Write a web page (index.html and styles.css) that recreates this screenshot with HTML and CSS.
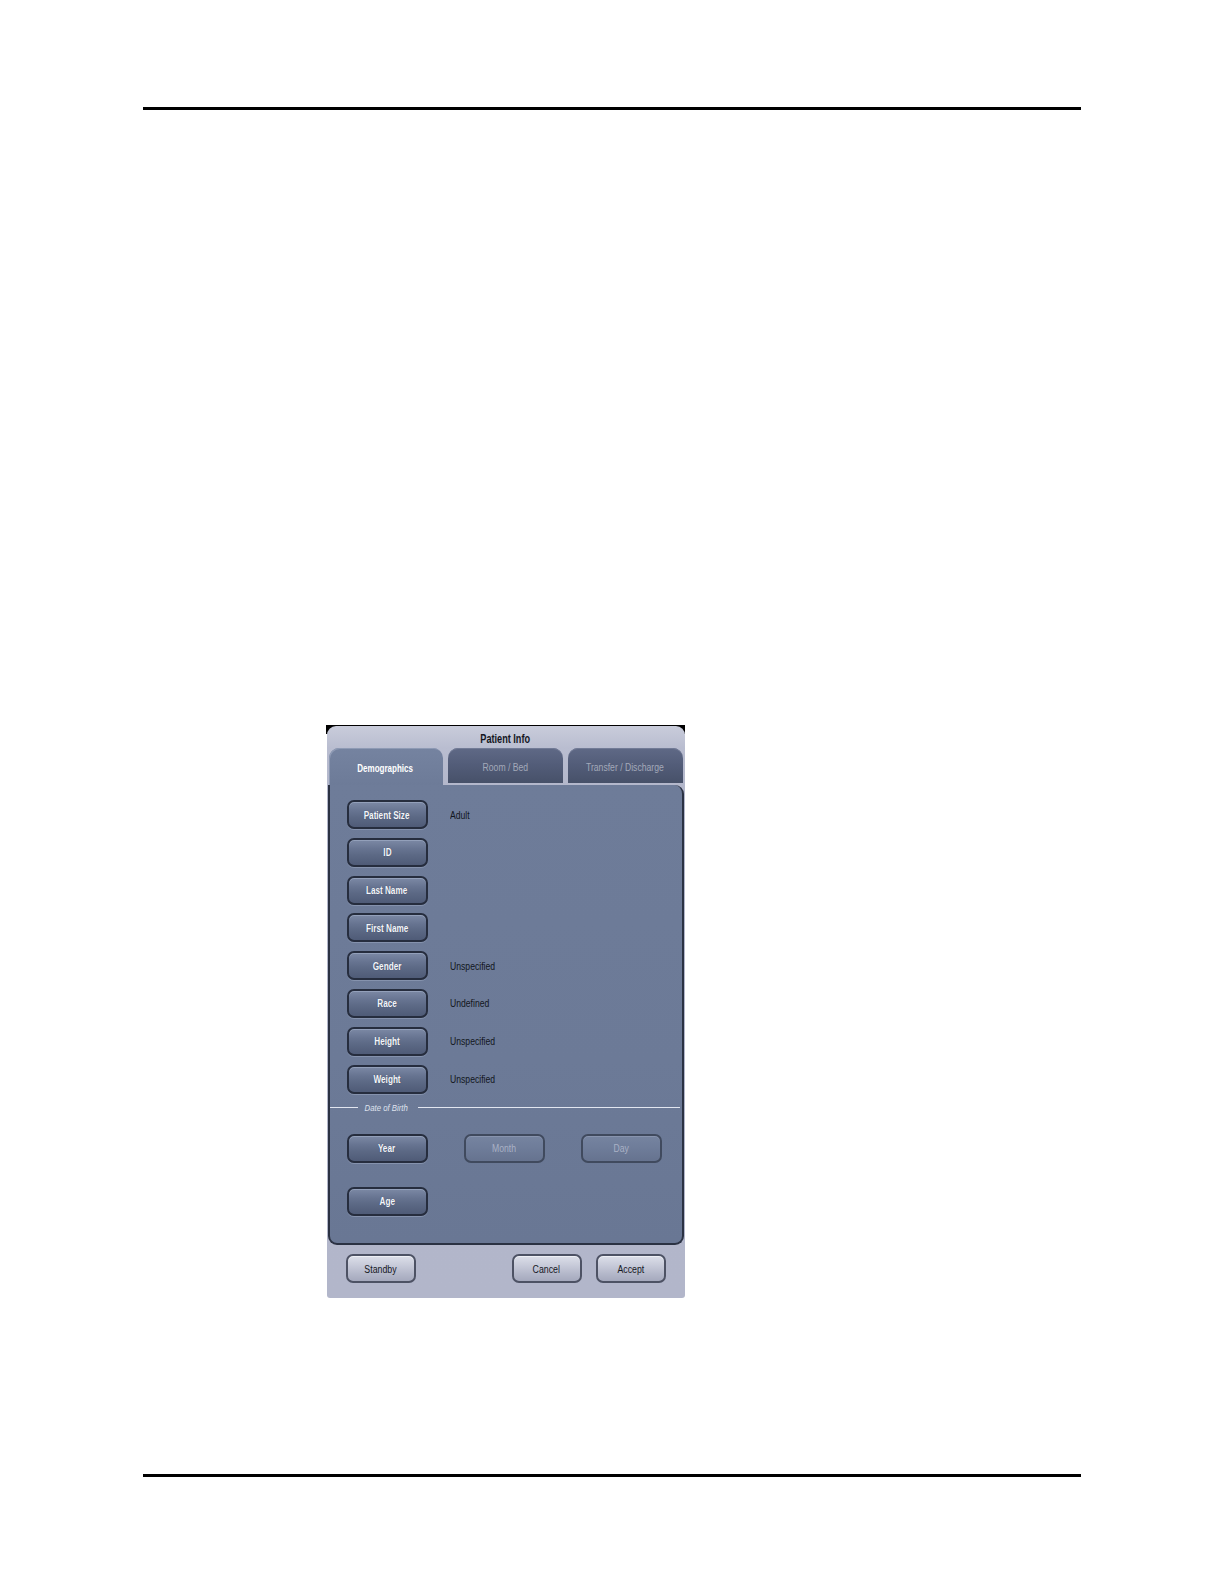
FILE: index.html
```html
<!DOCTYPE html>
<html lang="en">
<head>
<meta charset="utf-8">
<title>Patient Info</title>
<link rel="stylesheet" href="styles.css">
</head>
<body>
<div class="rule rule-top"></div>
<div class="shot">
  <div class="dialog">
    <div class="title"><span class="t">Patient Info</span></div>
    <div class="tabs">
      <div class="tab active"><span class="t">Demographics</span></div>
      <div class="tab"><span class="t">Room / Bed</span></div>
      <div class="tab"><span class="t">Transfer / Discharge</span></div>
    </div>
    <div class="panel">
      <div class="rows">
        <div class="row"><div class="btn"><span class="t">Patient Size</span></div><span class="val t">Adult</span></div>
        <div class="row"><div class="btn"><span class="t">ID</span></div><span class="val t"></span></div>
        <div class="row"><div class="btn"><span class="t">Last Name</span></div><span class="val t"></span></div>
        <div class="row"><div class="btn"><span class="t">First Name</span></div><span class="val t"></span></div>
        <div class="row"><div class="btn"><span class="t">Gender</span></div><span class="val t">Unspecified</span></div>
        <div class="row"><div class="btn"><span class="t">Race</span></div><span class="val t">Undefined</span></div>
        <div class="row"><div class="btn"><span class="t">Height</span></div><span class="val t">Unspecified</span></div>
        <div class="row"><div class="btn"><span class="t">Weight</span></div><span class="val t">Unspecified</span></div>
      </div>
      <div class="sep"><span class="sep-line short"></span><span class="sep-label">Date of Birth</span><span class="sep-line long"></span></div>
      <div class="dob">
        <div class="btn"><span class="t">Year</span></div>
        <div class="btn disabled"><span class="t">Month</span></div>
        <div class="btn disabled"><span class="t">Day</span></div>
      </div>
      <div class="age"><div class="btn"><span class="t">Age</span></div></div>
    </div>
    <div class="footer">
      <div class="fbtn"><span class="t">Standby</span></div>
      <div class="fright">
        <div class="fbtn"><span class="t">Cancel</span></div>
        <div class="fbtn"><span class="t">Accept</span></div>
      </div>
    </div>
  </div>
</div>
<div class="rule rule-bottom"></div>
</body>
</html>
```
FILE: styles.css
```css
html, body {
  margin: 0;
  padding: 0;
  background: #ffffff;
}
body {
  padding-top: 107px;
  font-family: "Liberation Sans", Arial, sans-serif;
  height: 1584px;
  box-sizing: border-box;
}
.t {
  display: inline-block;
  transform: scaleX(0.75);
  white-space: nowrap;
}
.rule {
  margin-left: 143px;
  width: 938px;
  height: 3px;
  background: #000;
}
.rule-bottom {
  margin-top: 176px;
}
.shot {
  margin-top: 615px;
  margin-left: 326px;
  width: 359px;
  height: 573px;
  background: linear-gradient(#000 0, #000 9px, transparent 9px);
  display: flex;
  justify-content: center;
}
.dialog {
  margin-top: 1px;
  width: 358px;
  height: 572px;
  border-radius: 9px 9px 3px 3px;
  background: linear-gradient(#c9ccdb 0, #b9bdd0 22px, #b3b7cb 60px, #b2b6ca 100%);
  display: flex;
  flex-direction: column;
  box-sizing: border-box;
  padding: 0 1px 0 1px;
}
.title {
  height: 22px;
  display: flex;
  align-items: center;
  justify-content: center;
  padding-top: 3px;
  box-sizing: border-box;
  font-weight: bold;
  font-size: 12.2px;
  color: #14161e;
}
.tabs {
  height: 37px;
  display: flex;
  align-items: flex-start;
  gap: 5px;
  padding-left: 1px;
}
.tab {
  width: 115px;
  height: 35px;
  border-radius: 10px 10px 0 0;
  background: linear-gradient(#5f6986 0, #525c78 50%, #475169 100%);
  color: #a3a9b9;
  font-size: 11.5px;
  display: flex;
  align-items: center;
  justify-content: center;
  box-sizing: border-box;
  padding-top: 2px;
  box-shadow: inset 0 1px 0 #727b96;
}
.tab.active {
  width: 114px;
  height: 37px;
  background: linear-gradient(#7583a0 0, #6d7b98 100%);
  color: #ffffff;
  font-weight: bold;
  font-size: 10.7px;
  box-shadow: inset 1px 1px 0 #8e9ab4;
}
.panel {
  height: 460px;
  background: linear-gradient(#6e7c99 0, #6c7a97 60%, #697794 100%);
  border: 2px solid #2b3243;
  border-top: none;
  border-radius: 0 9px 9px 9px;
  box-sizing: border-box;
  padding: 15px 0 0 17px;
  display: flex;
  flex-direction: column;
}
.rows {
  display: flex;
  flex-direction: column;
  gap: 8.8px;
}
.row {
  display: flex;
  align-items: center;
  gap: 22px;
}
.btn {
  width: 81px;
  height: 29px;
  box-sizing: border-box;
  border: 2px solid #262d3e;
  border-radius: 7px;
  background: linear-gradient(#7c89a5 0, #677491 35%, #5c6985 60%, #4f5b77 100%);
  box-shadow: inset 0 1px 0 #93a0ba, 0 1px 0 #8592ad;
  color: #f4f6fa;
  font-weight: bold;
  font-size: 10.9px;
  display: flex;
  align-items: center;
  justify-content: center;
  text-shadow: 0 0 1px #3a4460;
}
.btn.disabled {
  border-color: #404a5e;
  background: linear-gradient(#7684a0 0, #6e7c99 50%, #66738f 100%);
  box-shadow: inset 0 1px 0 #8894ae;
  color: #a9b1c5;
  font-weight: normal;
  font-size: 11.5px;
  text-shadow: none;
}
.val {
  color: #121620;
  font-size: 11.5px;
  transform-origin: left center;
}
.sep {
  margin-left: -17px;
  margin-top: 9px;
  height: 10px;
  display: flex;
  align-items: center;
}
.sep-line {
  height: 1px;
  background: #e2e6f0;
}
.sep-line.short {
  width: 28px;
}
.sep-line.long {
  flex: 1;
  margin-right: 2px;
}
.sep-label {
  display: inline-block;
  white-space: nowrap;
  transform: scaleX(0.82);
  transform-origin: left center;
  font-style: italic;
  font-size: 9.5px;
  color: #dfe3ee;
  padding-left: 8px;
}
.dob {
  margin-top: 21px;
  display: flex;
  gap: 36px;
}
.age {
  margin-top: 24px;
}
.footer {
  flex: 1;
  display: flex;
  justify-content: space-between;
  align-items: flex-start;
  padding: 9px 18px 0 18px;
}
.fright {
  display: flex;
  gap: 14px;
}
.fbtn {
  width: 70px;
  height: 29px;
  box-sizing: border-box;
  border: 2px solid #4d5264;
  border-radius: 7px;
  background: linear-gradient(#dcdfe9 0, #c6c9d8 40%, #b4b8ca 70%, #a5a9bd 100%);
  box-shadow: inset 0 1px 0 #eef0f6;
  color: #15171f;
  font-size: 11.7px;
  display: flex;
  align-items: center;
  justify-content: center;
}
```
